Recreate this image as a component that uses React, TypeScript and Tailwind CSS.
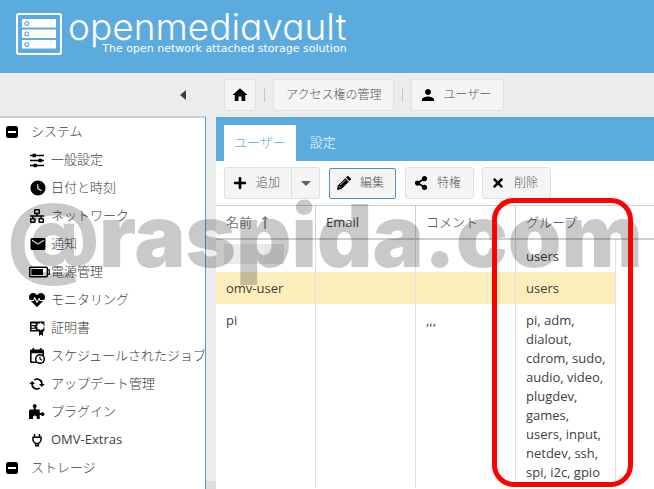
import type { ReactNode } from 'react';
import { MdEmail, MdHome, MdPerson, MdWatchLater } from 'react-icons/md';
import { FaHeartbeat, FaPlus, FaShareAlt, FaTimes } from 'react-icons/fa';

const LogoIcon = () => (
  <svg width="46" height="42" viewBox="0 0 46 42" fill="none">
    <rect x="1" y="1" width="44" height="40" rx="2" stroke="#fff" strokeWidth="2" />
    {[6, 16.5, 27].map((y) => (
      <g key={y}>
        <rect x="6" y={y} width="34" height="8.5" rx="0.5" fill="#fff" />
        <circle cx="10.7" cy={y + 4.4} r="1.9" stroke="#5cabdf" strokeWidth="1.2" />
      </g>
    ))}
  </svg>
);

const SlidersIcon = () => (
  <svg width="16" height="16" viewBox="0 0 16 16">
    <path d="M1 3.5h14M1 8.5h14M1 13.5h14" stroke="#000" strokeWidth="1.4" />
    <path d="M3.5 1.8h3.4v3.4H3.5zM9.5 6.8h3.4v3.4H9.5zM4.5 11.8h3.4v3.4H4.5z" />
  </svg>
);

const NetworkIcon = () => (
  <svg width="16" height="16" viewBox="0 0 16 16" fill="none" stroke="#000" strokeWidth="1.5">
    <rect x="5.7" y="1.7" width="4.6" height="3.8" rx="0.6" />
    <rect x="1.7" y="10.7" width="4.2" height="3.6" rx="0.6" />
    <rect x="10.1" y="10.7" width="4.2" height="3.6" rx="0.6" />
    <path d="M8 5.5V8M1 8h14M3.8 8v2.7M12.2 8v2.7" />
  </svg>
);

const BatteryIcon = () => (
  <svg width="21" height="12" viewBox="0 0 21 12">
    <rect x="0.7" y="1.2" width="17.6" height="9.6" rx="1" fill="none" stroke="#000" strokeWidth="1.4" />
    <path d="M18.5 3.8h1.8v4.4h-1.8" fill="none" stroke="#000" strokeWidth="1.2" />
    <rect x="2.4" y="3" width="11.6" height="6" />
  </svg>
);

const CertificateIcon = () => (
  <svg width="16" height="16" viewBox="0 0 16 16">
    <path
      fillRule="evenodd"
      d="M2 1.5h12.4c.6 0 1 .4 1 1v8c0 .6-.4 1-1 1H14V16l-2-1.4L10 16v-4.5H2c-.6 0-1-.4-1-1v-8c0-.6.4-1 1-1zM2.5 3.5v1.6h4.2V3.5zM2.5 6.3v1.4h3V6.3zM2.5 8.8V10h4.2V8.8zM11.5 2.5l-1.200 1.200-1.700-.1.100 1.700-1.200 1.200 1.200 1.200-.1 1.700 1.700-.1 1.200 1.200 1.200-1.200 1.700.1-.1-1.700 1.200-1.200-1.200-1.200.1-1.700-1.700.1z"
    />
  </svg>
);

const CalendarClockIcon = () => (
  <svg width="16" height="16" viewBox="0 0 16 16">
    <path
      fillRule="evenodd"
      d="M3.5 0h1.7v1.5h5.6V0h1.7v1.5h1c.8 0 1.5.6 1.5 1.5v12H2.5C1.6 15 1 14.4 1 13.5V3c0-.9.7-1.5 1.5-1.5h1zM2.6 5.2v8.200h10.800V5.200z"
    />
    <circle cx="11" cy="11" r="4.3" fill="#fff" stroke="#000" strokeWidth="1.5" />
    <path d="M11 8.6V11l1.9 1.3" fill="none" stroke="#000" strokeWidth="1.2" />
  </svg>
);

const SyncIcon = () => (
  <svg width="16" height="16" viewBox="0 0 16 16">
    <path
      d="M5.3 3.9A4.9 4.9 0 0 1 12.9 8.5M10.7 12.1A4.9 4.9 0 0 1 3.1 7.5"
      fill="none"
      stroke="#000"
      strokeWidth="1.7"
    />
    <path d="M10 8h5.8L12.9 11zM.2 8H6L3.1 5z" />
  </svg>
);

const PuzzleIcon = () => (
  <svg width="16" height="16" viewBox="0 0 16 16">
    <path d="M1 5.5h3.700V3.800a1.900 1.900 0 1 1 2 0v1.700h4v3.600h1.400a1.800 1.800 0 1 1 0 2h-1.400V15H7.800v-1.600a1.900 1.900 0 0 0-3.800 0V15H0V6.500z" />
  </svg>
);

const PlugIcon = () => (
  <svg width="16" height="16" viewBox="0 0 16 16" fill="none" stroke="#000" strokeWidth="1.5">
    <path d="M5.500 2v3M10.500 2v3M4 5.200h8v2.800c0 1.500-1.500 2.600-2.600 3.600H6.600C5.500 10.600 4 9.500 4 8zM6.700 11.500v2.300h2.600v-2.300" />
  </svg>
);

const PencilIcon = () => (
  <svg width="14" height="14" viewBox="0 0 14 14">
    <path d="M0 14l.9-4.5 7.300-7.300 3.600 3.600-7.300 7.300zM9 1.400L10 .4c.5-.5 1.200-.5 1.700 0l1.900 1.900c.5.5.5 1.200 0 1.700l-1 1z" />
    <path d="M3.3 9l5-5M2 10.300l1.700 1.700" stroke="#fff" strokeWidth="0.8" />
  </svg>
);

type Item = { label: string; icon: ReactNode };

const systemItems: Item[] = [
  { label: '一般設定', icon: <SlidersIcon /> },
  { label: '日付と時刻', icon: <MdWatchLater size={18} /> },
  { label: 'ネットワーク', icon: <NetworkIcon /> },
  { label: '通知', icon: <MdEmail size={18} /> },
  { label: '電源管理', icon: <BatteryIcon /> },
  { label: 'モニタリング', icon: <FaHeartbeat size={16} /> },
  { label: '証明書', icon: <CertificateIcon /> },
  { label: 'スケジュールされたジョブ', icon: <CalendarClockIcon /> },
  { label: 'アップデート管理', icon: <SyncIcon /> },
  { label: 'プラグイン', icon: <PuzzleIcon /> },
  { label: 'OMV-Extras', icon: <PlugIcon /> },
];

const users = [
  { name: '', email: '', comment: '', groups: 'users' },
  { name: 'omv-user', email: '', comment: '', groups: 'users', selected: true },
  {
    name: 'pi',
    email: '',
    comment: ',,,',
    groups: 'pi, adm, dialout, cdrom, sudo, audio, video, plugdev, games, users, input, netdev, ssh, spi, i2c, gpio',
  },
];

const Header = () => (
  <header className="flex h-[73px] shrink-0 items-start gap-1.5 bg-[#5cabdf] px-4 pt-[13px] text-white">
    <LogoIcon />
    <div className="relative">
      <h1 className="-mt-2 font-['Inter','Liberation_Sans',sans-serif] text-[37px] leading-[44px] font-light [font-feature-settings:'cv11']">
        openmediavault
      </h1>
      <p className="absolute top-[29px] right-0 font-['DejaVu_Sans',sans-serif] text-[11px] leading-[14px] whitespace-nowrap">
        The open network attached storage solution
      </p>
    </div>
  </header>
);

const TreeGroup = ({ label, children }: { label: string; children?: ReactNode }) => (
  <li>
    <button className="flex h-7 w-full items-center gap-[13px] pl-1.5 font-light">
      <svg width="12" height="12" viewBox="0 0 12 12">
        <rect width="12" height="12" rx="2.5" />
        <path d="M2 6h8" stroke="#fff" strokeWidth="2" />
      </svg>
      {label}
    </button>
    {children}
  </li>
);

const Sidebar = () => (
  <nav className="w-[206px] shrink-0 overflow-hidden border-t-2 border-r border-t-[#cecece] border-r-[#5c9ccc] bg-white">
    <ul>
      <TreeGroup label="システム">
        <ul>
          {systemItems.map((item) => (
            <li key={item.label} className="font-light last:font-normal">
              <a href="#" className="flex h-7 items-center pl-[29px] whitespace-nowrap">
                <span className="flex w-[22px] shrink-0 items-center text-black">{item.icon}</span>
                {item.label}
              </a>
            </li>
          ))}
        </ul>
      </TreeGroup>
      <TreeGroup label="ストレージ" />
      <li className="flex h-7 items-center pl-8">
        <span className="h-3 w-2.5 rounded-xs bg-neutral-400" />
      </li>
    </ul>
  </nav>
);

const crumb = 'flex h-8 items-center rounded-[3px] border border-[#e0e0e0] bg-[#f5f5f5]';

const Breadcrumbs = () => (
  <div className="flex h-11 shrink-0 items-center">
    <div className="flex w-[216px] shrink-0 justify-end pr-[30px]">
      <button aria-label="Collapse">
        <svg width="6" height="10" viewBox="0 0 6 10">
          <path d="M6 0v10L0 5z" fill="#404040" />
        </svg>
      </button>
    </div>
    <div className="flex items-center gap-2 pl-2 text-xs font-light text-[#555]">
      <button aria-label="Home" className={`${crumb} px-1.5 text-black`}>
        <MdHome size={18} />
      </button>
      <span className="h-3.5 w-px bg-[#c6c6c6]" />
      <button className={`${crumb} px-3`}>アクセス権の管理</button>
      <span className="h-3.5 w-px bg-[#c6c6c6]" />
      <button className={`${crumb} gap-1.5 pr-3 pl-[7px]`}>
        <MdPerson size={18} className="text-black" />
        ユーザー
      </button>
    </div>
  </div>
);

const tool = 'flex h-8 items-center gap-[9px] rounded-[3px] border border-[#e0e0e0] bg-[#f5f5f5] pr-3 pl-2';

const Toolbar = () => (
  <div className="flex h-11 items-center gap-2 pl-2 text-xs font-light text-[#555]">
    <div className="flex h-8 rounded-[3px] border border-[#e0e0e0] bg-[#f5f5f5]">
      <button className="flex items-center gap-[9px] border-r border-[#e0e0e0] pr-[11px] pl-2">
        <FaPlus size={14} className="text-black" />
        追加
      </button>
      <button aria-label="More" className="pr-2 pl-[9px]">
        <svg width="10" height="5" viewBox="0 0 10 5">
          <path d="M0 0h10L5 5z" fill="#606060" />
        </svg>
      </button>
    </div>
    <button className="mx-px flex h-[31px] items-center gap-[9px] rounded-xs border border-[#4c92cd] bg-[#f5f5f5] pr-[11px] pl-[7px]">
      <PencilIcon />
      編集
    </button>
    <button className={tool}>
      <FaShareAlt size={14} className="text-black" />
      特権
    </button>
    <button className={tool}>
      <FaTimes size={14} className="text-black" />
      削除
    </button>
  </div>
);

const headCell = 'border-r border-[#cecece] px-2.5 font-light';
const cell = 'border-r border-[#e0e0e0] pt-[7px] pr-2 pb-1.5 pl-2.5';

const UserTable = () => (
  <table className="w-[400px] table-fixed border-separate border-spacing-0 leading-[19px]">
    <thead>
      <tr className="h-8 text-left">
        <th className={headCell}>
          <span className="flex items-center gap-2.5">
            名前
            <svg width="6" height="13" viewBox="0 0 6 13" fill="none" stroke="#777" strokeWidth="1.4">
              <path d="M3 13V1M.5 3.5L3 1l2.5 2.5" />
            </svg>
          </span>
        </th>
        <th className="border-r border-[#cecece] px-2.5 font-normal">Email</th>
        <th className={headCell}>コメント</th>
        <th className="px-2.5 font-light">グループ</th>
      </tr>
      <tr>
        <td colSpan={4} className="relative h-0.5 p-0">
          <div className="absolute top-0 left-0 h-0.5 w-screen bg-[#cecece]" />
        </td>
      </tr>
    </thead>
    <tbody>
      {users.map((user, i) => (
        <tr key={i} className={user.selected ? 'h-8 bg-[#fceebb] align-top' : 'h-8 align-top'}>
          <td className={cell}>
            {user.name || (
              <span className="-mt-[3px] -mb-1 -ml-0.5 flex h-5 w-[60px] bg-black/8">
                <span className="ml-10 w-5 bg-black/2" />
              </span>
            )}
          </td>
          <td className={cell}>{user.email}</td>
          <td className={cell}>{user.comment}</td>
          <td className={cell}>{user.groups}</td>
        </tr>
      ))}
    </tbody>
  </table>
);

const App = () => {
  return (
    <div className="relative flex h-screen flex-col overflow-hidden bg-[#ececec] font-['Open_Sans','Noto_Sans_CJK_JP',sans-serif] text-[13px] text-[#404040]">
      <Header />
      <Breadcrumbs />
      <div className="-mt-px flex min-h-0 flex-1">
        <Sidebar />
        <div className="flex w-2.5 shrink-0 flex-col justify-end">
          <div className="h-2 bg-[#dcdcdc]" />
        </div>
        <main className="mt-px min-w-0 flex-1 overflow-hidden bg-white">
          <div className="flex h-11 items-end bg-[#5cabdf] pl-2 font-light" role="tablist">
            <button role="tab" aria-selected="true" className="h-9 bg-white px-2.5 text-[#5cabdf]">
              ユーザー
            </button>
            <button role="tab" aria-selected="false" className="h-9 px-3.5 text-white">
              設定
            </button>
          </div>
          <Toolbar />
          <div className="border-t border-[#cecece]">
            <UserTable />
          </div>
        </main>
      </div>
      <div className="pointer-events-none absolute top-[182px] left-2 font-['Inter','Liberation_Sans',sans-serif] text-[86px] leading-[108px] font-black whitespace-nowrap text-black/21">
        @raspida.com
      </div>
      <div className="pointer-events-none absolute top-[198px] left-[492px] h-[289px] w-[141px] rounded-[22px] border-5 border-[#f00]" />
    </div>
  );
};

export default App;
